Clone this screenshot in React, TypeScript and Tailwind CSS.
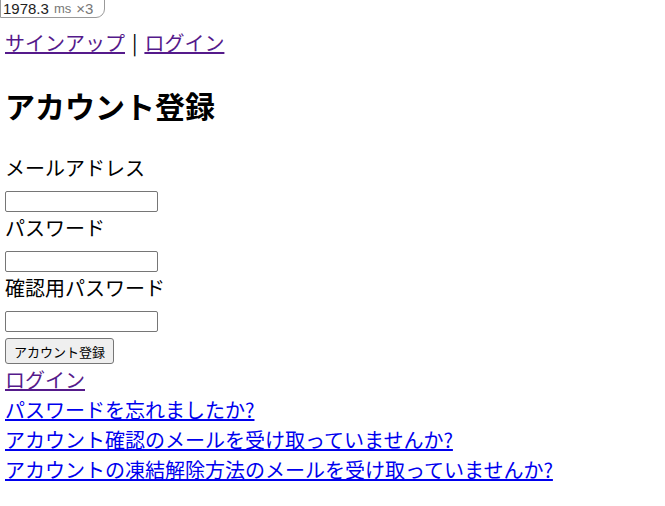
import React from "react";

const font = { fontFamily: '"Noto Sans CJK JP", "Noto Sans", sans-serif' };

const inputCls =
  "mt-[8px] mb-[1px] box-border block h-[21px] w-[153px] rounded-[2px] border border-[#767676] bg-white";

export default function App() {
  return (
    <div className="relative min-h-[506px] bg-white text-black" style={font}>
      <div
        className="absolute left-0 top-[-1px] flex h-[19px] w-[105px] items-center gap-[5px] rounded-br-[9px] border border-[#9a9a9a] bg-white pl-[2px] text-[15px] leading-none text-[#222]"
        style={{ fontFamily: '"Liberation Sans", Arial, sans-serif' }}
      >
        <span>1978.3</span>
        <span className="text-[13px] text-[#777]">ms</span>
        <span className="text-[#777]">×3</span>
      </div>
      <div className="pl-[5px] pt-[28px] text-[20px] leading-[30px]">
        <p className="flex items-baseline">
          <a href="#" className="text-[#551A8B] underline">サインアップ</a>
          <span className="mx-[7px]">|</span>
          <a href="#" className="text-[#551A8B] underline">ログイン</a>
        </p>
        <h1 className="my-[25px] text-[30px] font-bold leading-[45px]">アカウント登録</h1>
        <div>
          <label className="block">メールアドレス</label>
          <input type="email" className={inputCls} />
        </div>
        <div>
          <label className="block">パスワード</label>
          <input type="password" className={inputCls} />
        </div>
        <div>
          <label className="block">確認用パスワード</label>
          <input type="password" className={inputCls} />
        </div>
        <div className="h-[32px] pt-[5px]">
          <button className="box-border flex h-[26px] w-[109px] items-center justify-center rounded-[3px] border border-[#767676] bg-[#efefef] text-[13px] leading-none text-black">
            アカウント登録
          </button>
        </div>
        <div className="flex flex-col items-start">
          <a href="#" className="text-[#551A8B] underline">ログイン</a>
          <a href="#" className="text-[#0000EE] underline">パスワードを忘れましたか?</a>
          <a href="#" className="text-[#0000EE] underline">アカウント確認のメールを受け取っていませんか?</a>
          <a href="#" className="text-[#0000EE] underline">アカウントの凍結解除方法のメールを受け取っていませんか?</a>
        </div>
      </div>
    </div>
  );
}
